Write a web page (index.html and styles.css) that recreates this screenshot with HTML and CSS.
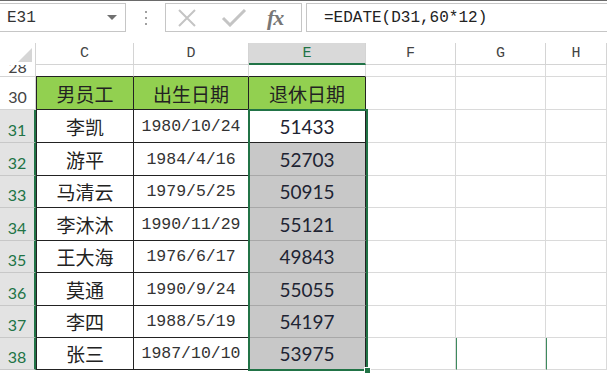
FILE: index.html
```html
<!DOCTYPE html>
<html lang="zh-CN">
<head>
    <meta charset="UTF-8">
    <title>退休日期</title>
    <link rel="stylesheet" href="styles.css">
</head>
<body>
    <div class="app">
        <div class="formula-bar">
            <div class="name-box">
                <span>E31</span>
                <svg class="drop" width="10" height="6" viewBox="0 0 10 6"><path d="M0 0 H10 L5 5 Z" fill="#707070"/></svg>
            </div>
            <div class="grip">
                <svg width="4" height="14" viewBox="0 0 4 14">
                    <rect x="1" y="0" width="2" height="2" fill="#a0a0a0"/>
                    <rect x="1" y="6" width="2" height="2" fill="#a0a0a0"/>
                    <rect x="1" y="12" width="2" height="2" fill="#a0a0a0"/>
                </svg>
            </div>
            <div class="fx-buttons">
                <svg class="icon-x" width="20" height="18" viewBox="0 0 20 18">
                    <path d="M2 1 L18 17 M18 1 L2 17" stroke="#c4c4c4" stroke-width="2" fill="none"/>
                </svg>
                <svg class="icon-ok" width="26" height="18" viewBox="0 0 26 18">
                    <path d="M2 9 L9 16 L24 1" stroke="#c4c4c4" stroke-width="3" fill="none"/>
                </svg>
                <span class="fx">fx</span>
            </div>
            <div class="formula-input">=EDATE(D31,60*12)</div>
        </div>

        <div class="sheet">
            <!-- 列标题 -->
            <div class="corner"><svg width="14" height="14" viewBox="0 0 14 14"><path d="M14 0 V14 H0 Z" fill="#d6d6d6"/></svg></div>
            <div class="col-head">C</div>
            <div class="col-head">D</div>
            <div class="col-head active">E</div>
            <div class="col-head">F</div>
            <div class="col-head">G</div>
            <div class="col-head">H</div>

            <!-- 第28行（上半部分被遮住） -->
            <div class="row-head cut"><span>28</span></div>
            <div class="cell top-edge"></div>
            <div class="cell top-edge"></div>
            <div class="cell top-edge"></div>
            <div class="cell"></div>
            <div class="cell"></div>
            <div class="cell"></div>

            <!-- 表头 -->
            <div class="row-head">30</div>
            <div class="cell data first title">男员工</div>
            <div class="cell data title">出生日期</div>
            <div class="cell data title">退休日期</div>
            <div class="cell"></div>
            <div class="cell"></div>
            <div class="cell"></div>

            <div class="row-head sel">31</div>
            <div class="cell data first name">李凯</div>
            <div class="cell data date">1980/10/24</div>
            <div class="cell data num">51433</div>
            <div class="cell"></div>
            <div class="cell"></div>
            <div class="cell"></div>

            <div class="row-head sel">32</div>
            <div class="cell data first name">游平</div>
            <div class="cell data date">1984/4/16</div>
            <div class="cell data num shade">52703</div>
            <div class="cell"></div>
            <div class="cell"></div>
            <div class="cell"></div>

            <div class="row-head sel">33</div>
            <div class="cell data first name">马清云</div>
            <div class="cell data date">1979/5/25</div>
            <div class="cell data num shade">50915</div>
            <div class="cell"></div>
            <div class="cell"></div>
            <div class="cell"></div>

            <div class="row-head sel">34</div>
            <div class="cell data first name">李沐沐</div>
            <div class="cell data date">1990/11/29</div>
            <div class="cell data num shade">55121</div>
            <div class="cell"></div>
            <div class="cell"></div>
            <div class="cell"></div>

            <div class="row-head sel">35</div>
            <div class="cell data first name">王大海</div>
            <div class="cell data date">1976/6/17</div>
            <div class="cell data num shade">49843</div>
            <div class="cell"></div>
            <div class="cell"></div>
            <div class="cell"></div>

            <div class="row-head sel">36</div>
            <div class="cell data first name">莫通</div>
            <div class="cell data date">1990/9/24</div>
            <div class="cell data num shade">55055</div>
            <div class="cell"></div>
            <div class="cell"></div>
            <div class="cell"></div>

            <div class="row-head sel">37</div>
            <div class="cell data first name">李四</div>
            <div class="cell data date">1988/5/19</div>
            <div class="cell data num shade">54197</div>
            <div class="cell"></div>
            <div class="cell"></div>
            <div class="cell"></div>

            <div class="row-head sel">38</div>
            <div class="cell data first name">张三</div>
            <div class="cell data date">1987/10/10</div>
            <div class="cell data num shade">53975</div>
            <div class="cell"></div>
            <div class="cell mark"></div>
            <div class="cell mark"></div>

            <!-- 选区框 -->
            <div class="selection"><span class="handle"></span></div>
        </div>
    </div>
</body>
</html>
```

FILE: styles.css
```css
* {
    box-sizing: border-box;
}

body {
    margin: 0;
    background: #fff;
    font-family: "Liberation Sans", "Noto Sans CJK SC", sans-serif;
    overflow: hidden;
}

.app {
    width: 607px;
    height: 374px;
    border-top: 1px solid #6a6a6a;
    overflow: hidden;
}

/* 编辑栏 */
.formula-bar {
    display: flex;
    height: 29px;
    margin-top: 2px;
    margin-bottom: 11px;
}

.name-box {
    flex: 0 0 126px;
    border: 1px solid #c6c6c6;
    border-left: none;
    display: flex;
    align-items: center;
    justify-content: space-between;
    padding: 0 8px 0 7px;
    font-family: "Liberation Mono", monospace;
    font-size: 16px;
    color: #333;
}

.grip {
    flex: 0 0 39px;
    display: flex;
    align-items: center;
    justify-content: center;
}

.fx-buttons {
    flex: 0 0 137px;
    border: 1px solid #c6c6c6;
    display: flex;
    align-items: center;
    padding-left: 11px;
}

.icon-x {
    margin-right: 24px;
}

.icon-ok {
    margin-right: 20px;
}

.fx {
    font-family: "Liberation Serif", serif;
    font-style: italic;
    font-weight: bold;
    font-size: 22px;
    color: #777;
    letter-spacing: -1px;
}

.formula-input {
    flex: 1;
    margin-left: 4px;
    border: 1px solid #c6c6c6;
    border-right: none;
    padding-left: 17px;
    display: flex;
    align-items: center;
    font-family: "Liberation Mono", monospace;
    font-size: 16px;
    color: #222;
}

/* 表格区域 */
.sheet {
    position: relative;
    display: grid;
    grid-template-columns: 36px 98px 115px 117px 90px 90px 61px;
    grid-template-rows: 22px 12px 33px 33px 33px 32px 33px 32px 33px 32px 32px;
}

.corner {
    border-right: 1px solid #d4d4d4;
    display: flex;
    align-items: flex-end;
    justify-content: flex-end;
    padding: 0 3px 3px 0;
}

.col-head {
    border-right: 1px solid #d4d4d4;
    border-bottom: 1px solid #d4d4d4;
    display: flex;
    align-items: center;
    justify-content: center;
    font-family: "Liberation Mono", monospace;
    font-size: 15px;
    color: #444;
}

.col-head.active {
    background: #d9d9d9;
    border-bottom: 2px solid #217346;
    color: #217346;
}

.row-head {
    border-right: 1px solid #d4d4d4;
    border-bottom: 1px solid #d4d4d4;
    display: flex;
    align-items: flex-end;
    justify-content: center;
    padding-bottom: 3px;
    font-family: "Lato", sans-serif;
    font-size: 16px;
    color: #444;
}

.row-head.cut {
    overflow: hidden;
    padding-bottom: 0;
    line-height: 18px;
}

.row-head.sel {
    background: #e3e3e3;
    border-right: 2px solid #217346;
    border-bottom-color: #c8c8c8;
    color: #217346;
}

.cell {
    border-right: 1px solid #dadada;
    border-bottom: 1px solid #dadada;
}

.cell.top-edge {
    border-bottom-color: #222;
}

.cell.mark {
    border-left: 1px solid #3d8a5e;
}

.cell.data {
    border-right-color: #222;
    border-bottom-color: #222;
    display: flex;
    align-items: center;
    justify-content: center;
    color: #222;
}

.cell.first {
    border-left: 1px solid #222;
}

.cell.title {
    background: #92d050;
    font-family: "Noto Sans CJK SC", sans-serif;
    font-size: 19px;
}

.cell.name {
    font-family: "Noto Sans CJK SC", sans-serif;
    font-size: 19px;
}

.cell.date {
    font-family: "Liberation Mono", "Noto Sans CJK SC", monospace;
    font-size: 16.5px;
    color: #333;
}

.cell.num {
    font-family: "Lato", sans-serif;
    font-size: 19px;
    color: #1e2433;
}

.cell.shade {
    background: #c8c8c8;
    border-bottom-color: #a8a8a8;
}

/* 选区 */
.selection {
    position: absolute;
    left: 248px;
    top: 66px;
    width: 120px;
    height: 262px;
    border: 2px solid #217346;
}

.handle {
    position: absolute;
    right: -5px;
    bottom: -5px;
    width: 7px;
    height: 7px;
    background: #217346;
    border: 1px solid #fff;
}
```
